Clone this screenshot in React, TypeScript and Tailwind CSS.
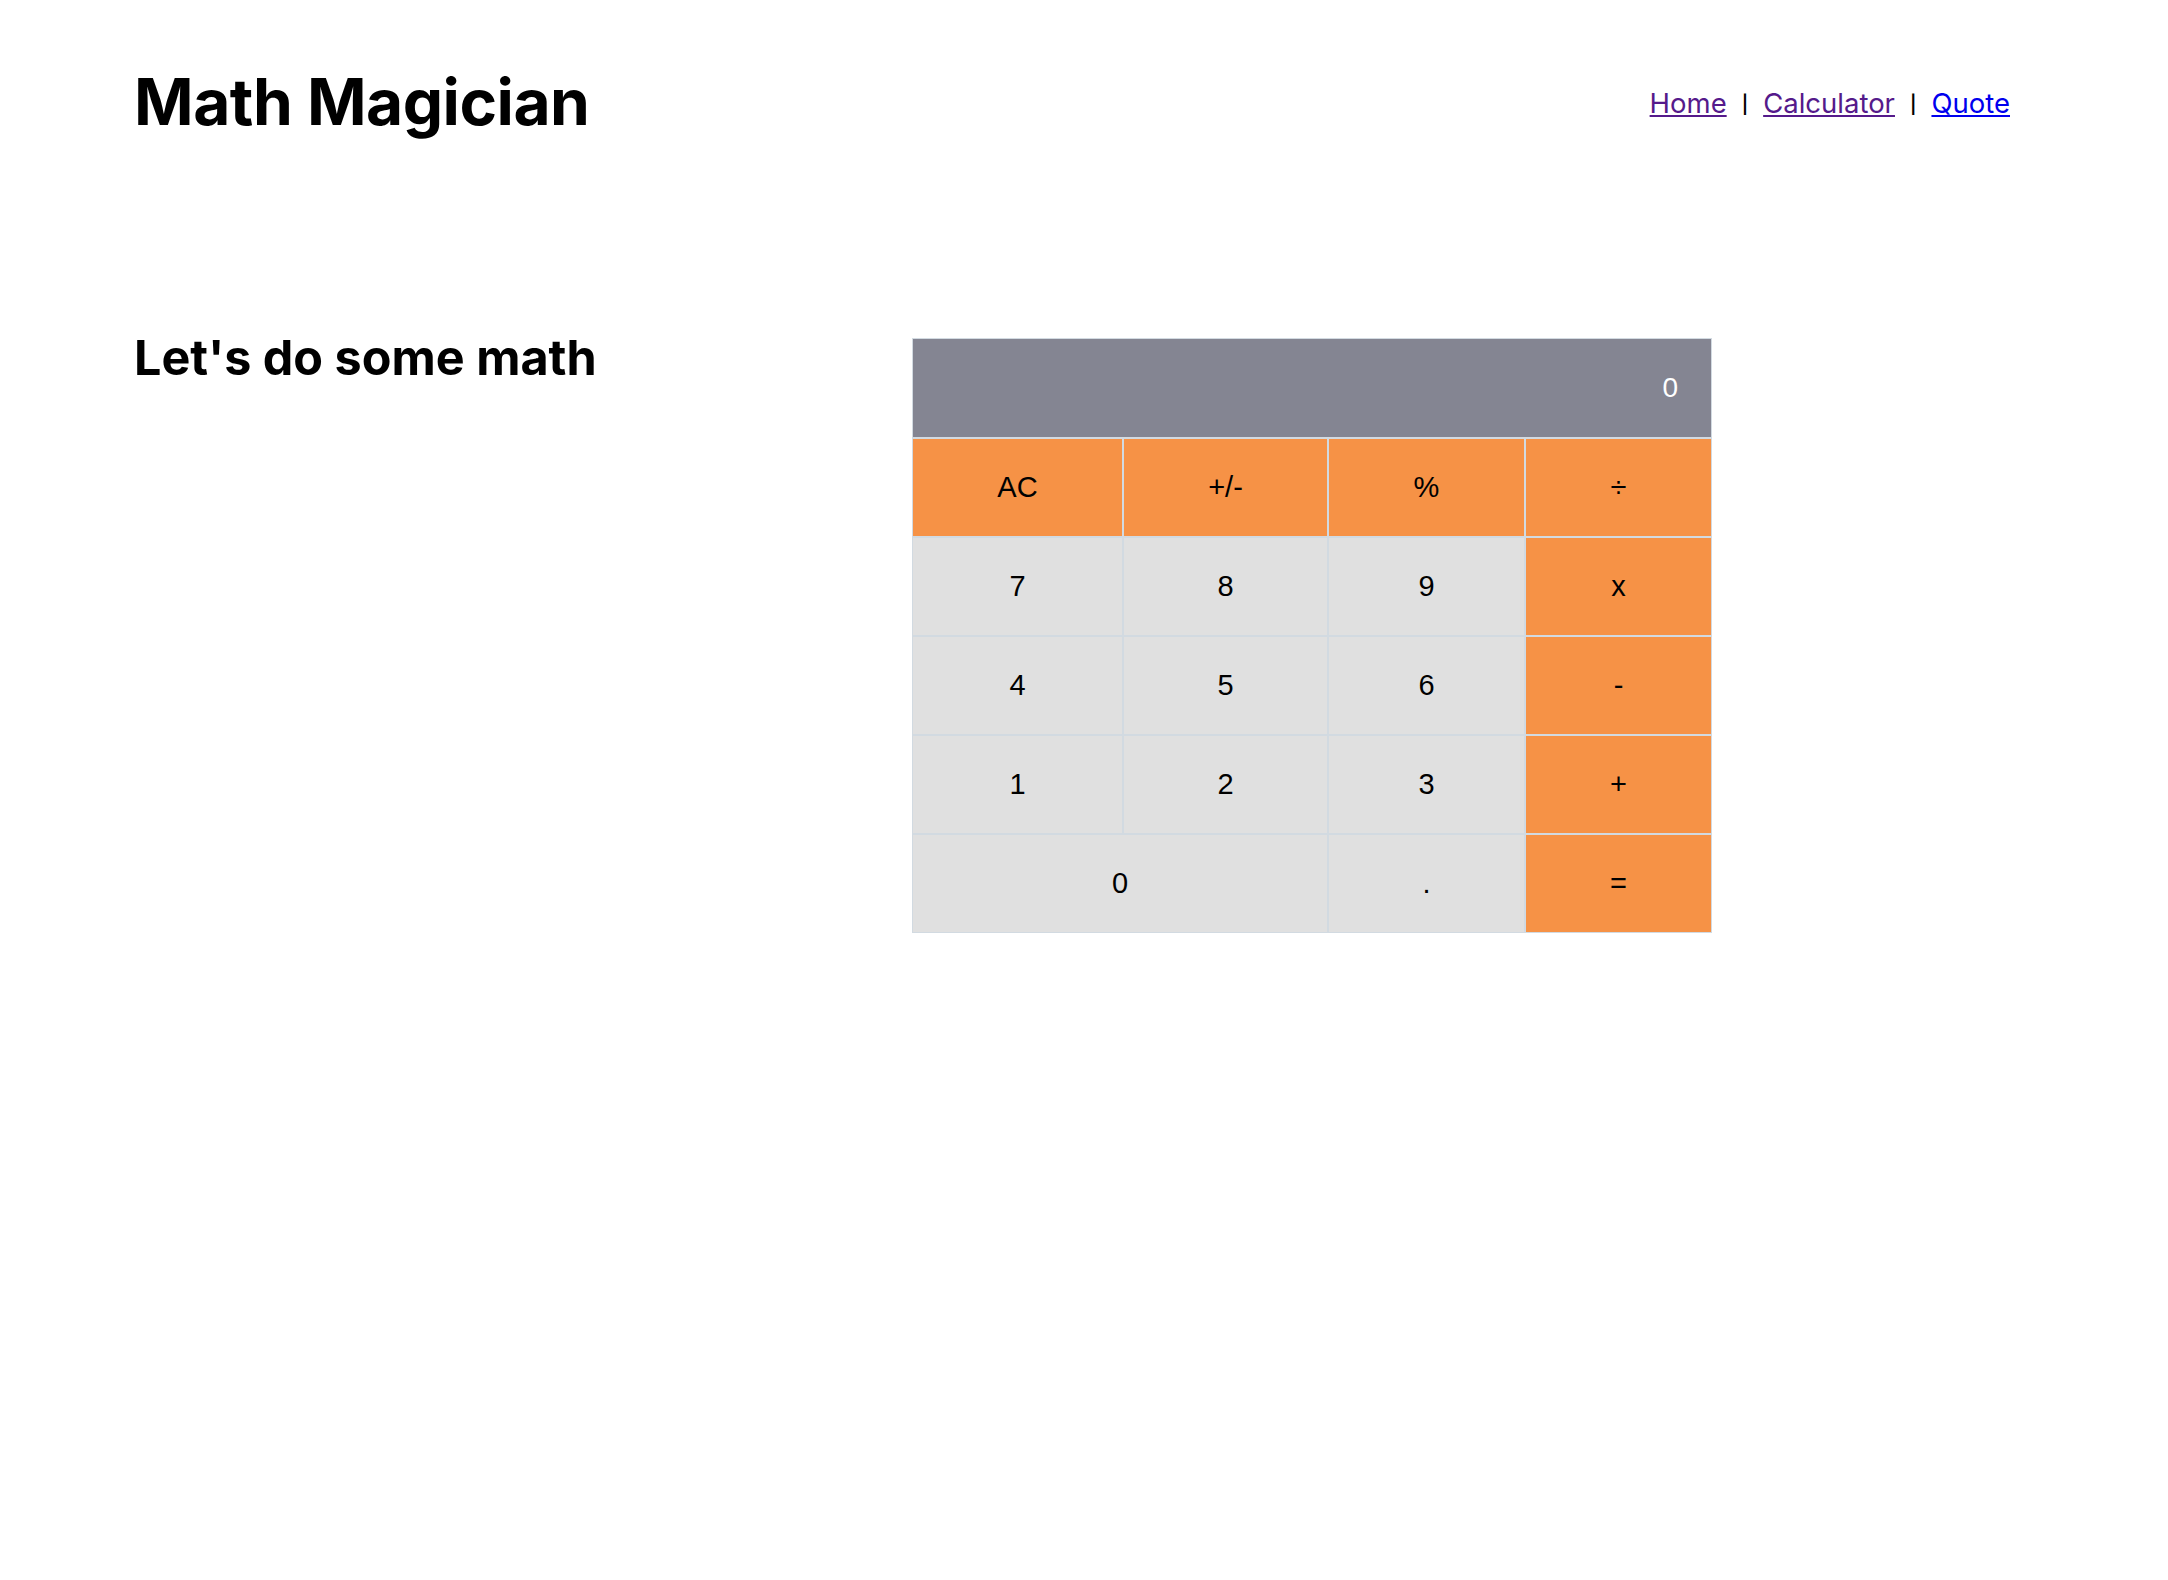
import React from 'react';

type Key = { label: string; op?: boolean; wide?: boolean };

const rows: Key[][] = [
  [{ label: 'AC', op: true }, { label: '+/-', op: true }, { label: '%', op: true }, { label: '÷', op: true }],
  [{ label: '7' }, { label: '8' }, { label: '9' }, { label: 'x', op: true }],
  [{ label: '4' }, { label: '5' }, { label: '6' }, { label: '-', op: true }],
  [{ label: '1' }, { label: '2' }, { label: '3' }, { label: '+', op: true }],
  [{ label: '0', wide: true }, { label: '.' }, { label: '=', op: true }],
];

const Calculator: React.FC = () => (
  <div className="w-[800px] mt-[2px] border border-[#d2dae1] bg-[#d2dae1] font-['Liberation_Sans',Arial,sans-serif]">
    <div className="h-[98px] bg-[#848592] flex items-center justify-end pr-[33px] text-white text-[28px] mb-[2px]">
      0
    </div>
    <div className="grid grid-cols-[209px_203px_195px_185px] auto-rows-[97px] gap-[2px]">
      {rows.flat().map((k, i) => (
        <button
          key={i}
          className={`flex items-center justify-center text-[29px] text-black ${
            k.op ? 'bg-[#f69246]' : 'bg-[#e0e0e0]'
          } ${k.wide ? 'col-span-2' : ''}`}
        >
          {k.label}
        </button>
      ))}
    </div>
  </div>
);

export default function App() {
  return (
    <div className="min-h-screen bg-white font-['Inter','Noto_Sans',sans-serif] text-black">
      <header className="flex items-center justify-between pl-[134px] pr-[158px] pt-[70px]">
        <h1 className="text-[64px] font-bold leading-none tracking-[-0.5px]">Math Magician</h1>
        <nav className="flex items-center text-[27.5px] mt-[4px]">
          <a href="#" className="underline text-[#551a8b]">Home</a>
          <span className="mx-[15px] text-[18px] font-semibold text-black">|</span>
          <a href="#" className="underline text-[#551a8b]">Calculator</a>
          <span className="mx-[15px] text-[18px] font-semibold text-black">|</span>
          <a href="#" className="underline text-[#0000ee]">Quote</a>
        </nav>
      </header>
      <main className="flex pl-[134px] pt-[202px]">
        <div className="w-[778px] shrink-0">
          <h2 className="text-[48.5px] font-bold leading-none mt-[-2px]">Let's do some math</h2>
        </div>
        <Calculator />
      </main>
    </div>
  );
}
